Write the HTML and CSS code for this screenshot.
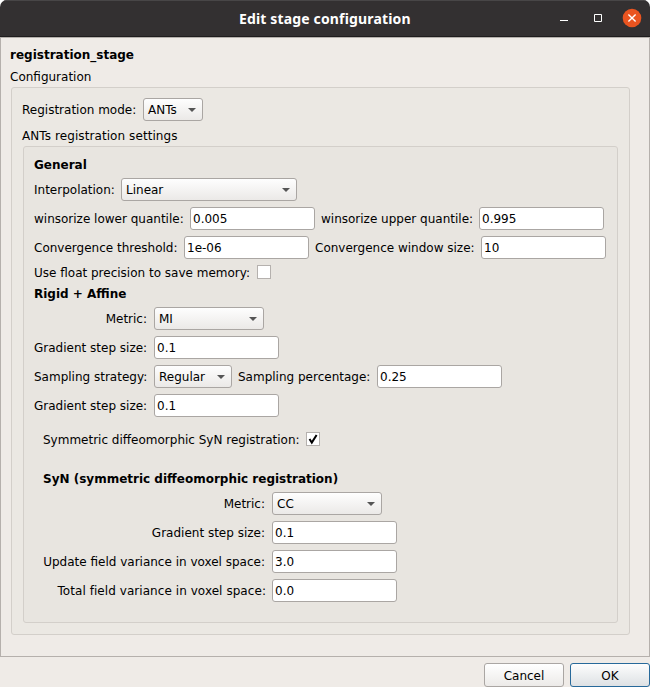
FILE: index.html
```html
<!DOCTYPE html>
<html lang="en">
<head>
<meta charset="utf-8">
<title>Edit stage configuration</title>
<link rel="stylesheet" href="styles.css">
</head>
<body>
<div class="window">
  <header class="titlebar">
    <h1 class="title">Edit stage configuration</h1>
    <div class="controls">
      <svg width="90" height="36" viewBox="0 1 90 36">
        <path d="M0 20.500h8" stroke="#fff" fill="none"/>
        <path d="M34.500 14.500h7v7h-7z" stroke="#fff" fill="none"/>
        <circle cx="72" cy="18" r="9.300" fill="#e95420"/>
        <path d="M68.400 14.400l7.200 7.200M75.600 14.400l-7.200 7.200" stroke="#fff" stroke-width="1.400" fill="none"/>
      </svg>
    </div>
  </header>
  <main class="panel">
    <h2 class="line">registration_stage</h2>
    <div class="line">Configuration</div>
    <section class="group outer">
      <div class="row"><label class="w-mode">Registration mode:</label><div class="combo c-mode">ANTs</div></div>
      <div class="line settings">ANTs registration settings</div>
      <section class="group inner">
        <h3 class="line">General</h3>
        <div class="row"><label class="w-interp">Interpolation:</label><div class="combo c-interp">Linear</div></div>
        <div class="row"><label class="w-lower">winsorize lower quantile:</label><div class="field">0.005</div><label class="w-upper second">winsorize upper quantile:</label><div class="field">0.995</div></div>
        <div class="row"><label class="w-thresh">Convergence threshold:</label><div class="field">1e-06</div><label class="w-window second">Convergence window size:</label><div class="field">10</div></div>
        <div class="row short"><label class="w-float">Use float precision to save memory:</label><div class="check"></div></div>
        <h3 class="line">Rigid + Affine</h3>
        <div class="row"><label class="w-rigid">Metric:</label><div class="combo c-metric">MI</div></div>
        <div class="row"><label class="w-rigid">Gradient step size:</label><div class="field">0.1</div></div>
        <div class="row"><label class="w-rigid">Sampling strategy:</label><div class="combo c-strategy">Regular</div><label class="w-percent second">Sampling percentage:</label><div class="field">0.25</div></div>
        <div class="row"><label class="w-rigid">Gradient step size:</label><div class="field">0.1</div></div>
        <div class="syn">
          <div class="row syn-toggle"><label class="w-syntoggle">Symmetric diffeomorphic SyN registration:</label><div class="check"><svg width="12" height="12" viewBox="0 0 12 12"><path d="M2.500 6l2.300 3.600L9.600 2" fill="none" stroke="#000" stroke-width="2"/></svg></div></div>
          <h3 class="line">SyN (symmetric diffeomorphic registration)</h3>
          <div class="row"><label class="w-syn">Metric:</label><div class="combo c-metric">CC</div></div>
          <div class="row"><label class="w-syn">Gradient step size:</label><div class="field">0.1</div></div>
          <div class="row"><label class="w-syn">Update field variance in voxel space:</label><div class="field">3.0</div></div>
          <div class="row"><label class="w-syn total">Total field variance in voxel space:</label><div class="field">0.0</div></div>
        </div>
      </section>
    </section>
  </main>
  <footer class="actions">
    <button class="btn">Cancel</button>
    <button class="btn primary">OK</button>
  </footer>
</div>
</body>
</html>
```
FILE: styles.css
```css
* { box-sizing: border-box; }
body {
  margin: 0;
  background: #fff;
  font: 12px/16px "DejaVu Sans", sans-serif;
  color: #000;
  overflow: hidden;
}
h1, h2, h3 { margin: 0; font-size: 12px; font-weight: bold; color: #000; }
.window {
  width: 650px;
  height: 687px;
  background: #efebe7;
  border-radius: 7px 7px 0 0;
  overflow: hidden;
}
.titlebar {
  display: flex;
  align-items: center;
  height: 37px;
  padding-left: 239px;
  background: #333031;
  border-top: 1px solid #484647;
  border-bottom: 1px solid #1f1d1e;
}
.title {
  width: 321px;
  font: bold 14px/20px "Noto Sans", sans-serif;
  letter-spacing: 0.15px;
  color: #fff;
  white-space: nowrap;
}
.controls { height: 36px; }
.controls svg { display: block; }
.panel {
  height: 620px;
  padding: 8px 19px 0 9px;
  border: 1px solid #b5b0ac;
}
.line { height: 16px; margin-bottom: 6px; line-height: 18px; white-space: nowrap; }
.settings { letter-spacing: 0.08px; }
.group { border: 1px solid #d3cfca; border-radius: 3px; }
.outer {
  width: 619px;
  height: 548px;
  margin: -3px 0 0 1px;
  padding: 10px 10px 0;
  background: #ebe8e3;
}
.inner {
  width: 595px;
  height: 477px;
  margin: -3px 0 0 1px;
  padding: 9px 10px 0;
  background: #e8e5e0;
}
.row { display: flex; align-items: center; height: 23px; margin-bottom: 6px; }
.row.short { height: 14px; }
label { flex: none; padding-right: 1px; white-space: nowrap; text-align: right; }
.row.short label, .syn-toggle label { padding-top: 2px; }
.second { margin-left: 6px; }
.w-mode { width: 115px; }
.w-interp { width: 81px; }
.w-lower { width: 150px; }
.w-upper { width: 152px; }
.w-thresh { width: 144px; }
.w-window { width: 160px; }
.w-float { width: 217px; }
.w-rigid { width: 114px; }
.w-percent { width: 133px; }
.w-syntoggle { width: 257px; }
.w-syn { width: 223px; }
.total { padding-right: 0; letter-spacing: 0.06px; }
.field, .combo {
  flex: none;
  height: 23px;
  margin-left: 6px;
  border: 1px solid #aaa6a3;
  border-radius: 3px;
  line-height: 23px;
}
.field { width: 125px; padding-left: 2px; background: #fff; }
.combo {
  display: flex;
  align-items: flex-start;
  justify-content: space-between;
  padding: 0 6px 0 4px;
  background: linear-gradient(#fefefe, #ebe9e7);
}
.combo::after {
  content: "";
  margin-top: 9px;
  border: 4px solid transparent;
  border-top-color: #555;
  border-bottom: 0;
}
.c-mode { width: 60px; }
.c-interp { width: 176px; }
.c-metric { width: 110px; }
.c-strategy { width: 78px; }
.check { width: 14px; height: 14px; margin-left: 6px; border: 1px solid #b5b1ae; background: #fff; }
.check svg { display: block; }
.syn { padding: 8px 0 0 9px; }
.syn-toggle { height: 16px; margin-bottom: 23px; }
.actions { display: flex; justify-content: flex-end; gap: 6px; padding-top: 6px; }
.btn {
  width: 80px;
  height: 24px;
  padding: 1px 0 0;
  font: inherit;
  color: #000;
  border: 1px solid #aaa6a3;
  border-radius: 3px;
  background: linear-gradient(#fff, #eceae8);
}
.primary { border-color: #27699a; background: linear-gradient(#fdfdfd, #dde1e4); }
```
